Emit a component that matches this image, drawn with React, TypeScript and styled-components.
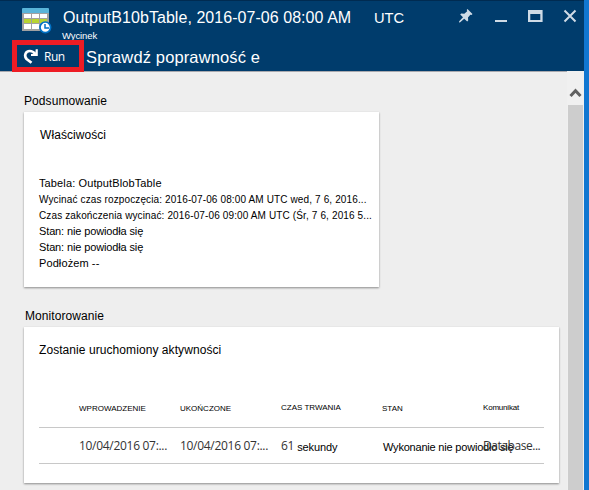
import React from "react";
import styled, { createGlobalStyle } from "styled-components";

const Global = createGlobalStyle`
  body { margin: 0; overflow: hidden; background: #eee; }
  * { box-sizing: border-box; }
`;

const sans = '"Liberation Sans", Arial, sans-serif';
const humanist = '"Open Sans", "Noto Sans", sans-serif';

const Page = styled.div`
  display: flex;
  width: 589px;
  height: 490px;
  overflow: hidden;
  background: #1177d1;
  color: #000;
  font-family: ${sans};
`;

const Blade = styled.main`
  display: flex;
  flex-direction: column;
  width: 584px;
  background: #eee;
`;

const Header = styled.header`
  height: 71px;
  flex: none;
  border-top: 1px solid #002b51;
  background: #003c6c;
  color: #fff;
`;

const TitleRow = styled.div`
  display: flex;
  height: 39px;
  padding-left: 22px;
`;

const SliceIcon = styled.svg`
  width: 30px;
  height: 26px;
  margin-top: 7px;
  flex: none;
`;

const Titles = styled.div`
  width: 312px;
  padding: 7px 0 0 10px;
`;

const Title = styled.h1`
  margin: 0 0 0 1px;
  font-size: 16px;
  font-weight: 400;
  line-height: 20px;
  letter-spacing: 0.05px;
  white-space: nowrap;
`;

const Subtitle = styled.div`
  font-size: 9.5px;
  line-height: 16px;
  letter-spacing: -0.1px;
`;

const Zone = styled.div`
  width: 94px;
  padding: 7px 0 0 10px;
  font-size: 14.7px;
  line-height: 20px;
`;

const WindowButtons = styled.div`
  display: flex;
  height: 30px;
`;

const WindowButton = styled.button<{ $gap: number }>`
  display: flex;
  flex: none;
  width: 16px;
  height: 30px;
  margin-right: ${(p) => p.$gap}px;
  padding: 7px 0 0;
  border: 0;
  background: none;
  svg { width: 16px; height: 16px; flex: none; }
`;

const Commands = styled.div`
  display: flex;
  align-items: center;
  height: 32px;
  padding-left: 12px;
`;

const RunButton = styled.button`
  position: relative;
  display: flex;
  align-items: center;
  gap: 5px;
  width: 72px;
  height: 32px;
  padding: 0 0 0 6px;
  border: 5px solid #ed1c24;
  background: #003c6c;
  color: #fff;
  font-family: ${humanist};
  font-size: 12px;
  line-height: 22px;
  letter-spacing: -0.5px;
  svg { width: 16px; height: 18px; flex: none; }
  span { padding-top: 2px; }
`;

const Validate = styled.span`
  margin: 1px 0 0 2px;
  font-size: 16.5px;
  line-height: 20px;
  letter-spacing: 0.13px;
`;

const Body = styled.div`
  display: flex;
  flex: 1;
  min-height: 0;
`;

const Content = styled.div`
  width: 567px;
  padding: 21px 0 0 24px;
  border-top: 1px solid #a9a9ae;
`;

const Scrollbar = styled.div`
  display: flex;
  flex-direction: column;
  width: 17px;
  padding: 0 1px;
  background: #f0f0f0;
  svg { width: 15px; height: 34px; flex: none; }
`;

const Thumb = styled.div`
  flex: 1;
  background: #cdcdcd;
`;

const SectionTitle = styled.h2<{ $indent?: number }>`
  margin: 0 0 3px ${(p) => p.$indent ?? 0}px;
  font-size: 12px;
  font-weight: 400;
  line-height: 16px;
  letter-spacing: 0.07px;
`;

const Card = styled.section<{ $width: number; $height: number }>`
  width: ${(p) => p.$width}px;
  height: ${(p) => p.$height}px;
  margin-bottom: 21px;
  padding: 15px 15px 0;
  background: #fff;
  box-shadow: 0 1px 2px rgba(0, 0, 0, 0.42);
`;

const CardTitle = styled.h3<{ $indent?: number }>`
  margin: 0 0 0 ${(p) => p.$indent ?? 0}px;
  font-size: 12px;
  font-weight: 400;
  line-height: 16px;
  letter-spacing: 0.07px;
`;

const Properties = styled.div`
  margin-top: 32px;
`;

const Property = styled.div<{ $track?: number }>`
  font-size: 11px;
  line-height: 16px;
  letter-spacing: ${(p) => p.$track ?? 0}px;
  white-space: nowrap;
`;

const TimeProperty = styled(Property)`
  padding-top: 1px;
  font-size: 10px;
  line-height: 15px;
`;

const Table = styled.div`
  width: 505px;
  margin-top: 38px;
`;

const Row = styled.div<{ $height: number }>`
  display: grid;
  grid-template-columns: 101px 101px 101px 101px 61px;
  align-items: center;
  height: ${(p) => p.$height}px;
  padding-left: 40px;
  border-bottom: 1px solid #c8c8c8;
`;

const HeadCell = styled.div<{ $lift?: number; $track?: number }>`
  padding-bottom: ${(p) => 5 + (p.$lift ?? 0)}px;
  font-size: 8px;
  line-height: 12px;
  letter-spacing: ${(p) => p.$track ?? 0}px;
  white-space: nowrap;
`;

const Cell = styled.div<{ $track?: number }>`
  color: #333;
  font-family: ${humanist};
  font-size: 12px;
  line-height: 18px;
  letter-spacing: ${(p) => p.$track ?? -0.3}px;
  white-space: nowrap;
`;

const StatusCell = styled.div`
  padding: 2px 0 0 1px;
  font-size: 11px;
  line-height: 16px;
  letter-spacing: -0.2px;
  white-space: nowrap;
`;

const Unit = styled.span`
  position: relative;
  top: 1px;
  margin-left: 3px;
  color: #000;
  font-family: ${sans};
  font-size: 11px;
  letter-spacing: -0.1px;
`;

export default function App() {
  return (
    <Page>
      <Global />
      <Blade>
        <Header>
          <TitleRow>
            <SliceIcon viewBox="0 0 30 26">
              <path fill="#a0a1a2" d="M0 4h27v19H0z" />
              <path fill="#59b4d9" d="M0 1q0-1 1-1h25q1 0 1 1v4H0z" />
              <path fill="#fff" d="M2 6h7v4H2zM10 6h7v4h-7zM18 6h7v4h-7zM2 16h7v5H2zM10 16h7v5h-7z" />
              <path fill="#b8d432" d="M2 11h7v4H2zM10 11h7v4h-7zM18 11h7v4h-7z" />
              <circle cx="23.3" cy="19.3" r="5.3" fill="#fff" stroke="#0072c6" strokeWidth="1.7" />
              <path d="M23 16v4h4" fill="none" stroke="#0072c6" strokeWidth="1.5" />
            </SliceIcon>
            <Titles>
              <Title>OutputB10bTable, 2016-07-06 08:00 AM</Title>
              <Subtitle>Wycinek</Subtitle>
            </Titles>
            <Zone>UTC</Zone>
            <WindowButtons>
              <WindowButton $gap={19} aria-label="Pin">
                <svg viewBox="0 0 16 16" fill="#cfdbe6">
                  <path d="M9.5 1l5 5-1 1-1.2-.3-2.3 2.8.2 3-1 1-3-2.8L2.2 14.3l-1.2.2.2-1.2L5 9.3 2.2 6.5l1-1 3.1.2 2.9-2.4-.5-1.4z" />
                </svg>
              </WindowButton>
              <WindowButton $gap={18} aria-label="Minimize">
                <svg viewBox="0 0 16 16"><path fill="#cfdbe6" d="M2 12h12v2H2z" /></svg>
              </WindowButton>
              <WindowButton $gap={19} aria-label="Maximize">
                <svg viewBox="0 0 16 16">
                  <path fill="#cfdbe6" fillRule="evenodd" d="M1 2h14.6v12H1zM3.3 6v6h10V6z" />
                </svg>
              </WindowButton>
              <WindowButton $gap={0} aria-label="Close">
                <svg viewBox="0 0 16 16"><path d="M2.5 2.5l11 11M13.5 2.5l-11 11" stroke="#cfdbe6" strokeWidth="2" /></svg>
              </WindowButton>
            </WindowButtons>
          </TitleRow>
          <Commands>
            <RunButton>
              <svg viewBox="0 0 16 18">
                <path d="M8.5 15.8L3.6 12C.9 9 2.3 4 6.8 4c2.5 0 4 1 5.5 3" fill="none" stroke="#fff" strokeWidth="2.7" />
                <path d="M14.8 2.2V9H8V7l4.3-.5.4-4.3z" fill="#fff" />
              </svg>
              <span>Run</span>
            </RunButton>
            <Validate>Sprawdź poprawność e</Validate>
          </Commands>
        </Header>
        <Body>
          <Content>
            <SectionTitle>Podsumowanie</SectionTitle>
            <Card $width={355} $height={175}>
              <CardTitle $indent={1}>Właściwości</CardTitle>
              <Properties>
                <Property $track={0.12}>Tabela: OutputBlobTable</Property>
                <TimeProperty $track={0.13}>Wycinać czas rozpoczęcia: 2016-07-06 08:00 AM UTC wed, 7 6, 2016...</TimeProperty>
                <TimeProperty $track={0.13}>Czas zakończenia wycinać: 2016-07-06 09:00 AM UTC (Śr, 7 6, 2016 5...</TimeProperty>
                <Property $track={-0.13}>Stan: nie powiodła się</Property>
                <Property $track={-0.13}>Stan: nie powiodła się</Property>
                <Property $track={0.1}>Podłożem --</Property>
              </Properties>
            </Card>
            <SectionTitle $indent={1}>Monitorowanie</SectionTitle>
            <Card $width={535} $height={156}>
              <CardTitle>Zostanie uruchomiony aktywności</CardTitle>
              <Table>
                <Row $height={32}>
                  <HeadCell>WPROWADZENIE</HeadCell>
                  <HeadCell>UKOŃCZONE</HeadCell>
                  <HeadCell $lift={2}>CZAS TRWANIA</HeadCell>
                  <HeadCell>STAN</HeadCell>
                  <HeadCell $lift={2} $track={-0.2}>Komunikat</HeadCell>
                </Row>
                <Row $height={36}>
                  <Cell>10/04/2016 07:...</Cell>
                  <Cell>10/04/2016 07:...</Cell>
                  <Cell>61<Unit>sekundy</Unit></Cell>
                  <StatusCell>Wykonanie nie powiodło się</StatusCell>
                  <Cell $track={-0.45}>Database...</Cell>
                </Row>
              </Table>
            </Card>
          </Content>
          <Scrollbar>
            <svg viewBox="0 0 15 34"><path d="M2.5 25l5-5.3 5 5.3" fill="none" stroke="#606060" strokeWidth="3" /></svg>
            <Thumb />
          </Scrollbar>
        </Body>
      </Blade>
    </Page>
  );
}
